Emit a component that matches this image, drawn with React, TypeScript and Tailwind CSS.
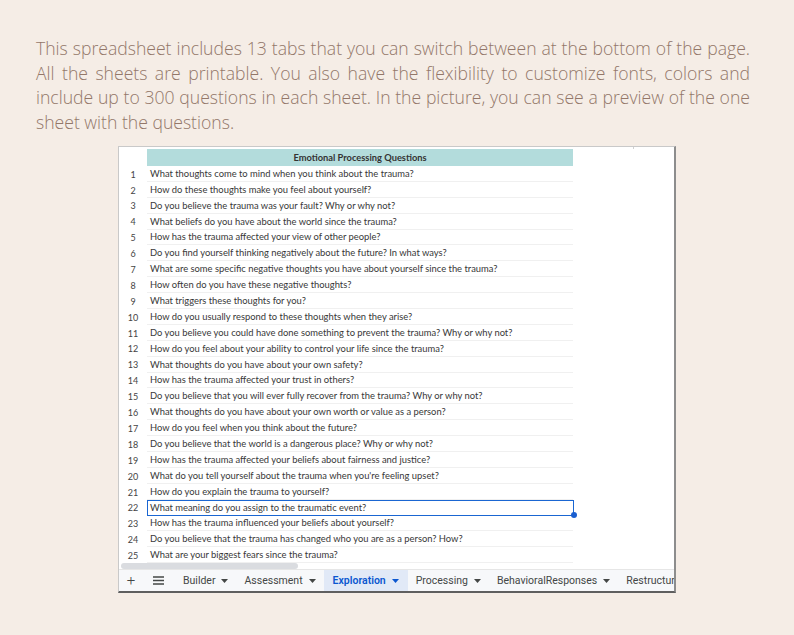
const questions = [
  "What thoughts come to mind when you think about the trauma?",
  "How do these thoughts make you feel about yourself?",
  "Do you believe the trauma was your fault? Why or why not?",
  "What beliefs do you have about the world since the trauma?",
  "How has the trauma affected your view of other people?",
  "Do you find yourself thinking negatively about the future? In what ways?",
  "What are some specific negative thoughts you have about yourself since the trauma?",
  "How often do you have these negative thoughts?",
  "What triggers these thoughts for you?",
  "How do you usually respond to these thoughts when they arise?",
  "Do you believe you could have done something to prevent the trauma? Why or why not?",
  "How do you feel about your ability to control your life since the trauma?",
  "What thoughts do you have about your own safety?",
  "How has the trauma affected your trust in others?",
  "Do you believe that you will ever fully recover from the trauma? Why or why not?",
  "What thoughts do you have about your own worth or value as a person?",
  "How do you feel when you think about the future?",
  "Do you believe that the world is a dangerous place? Why or why not?",
  "How has the trauma affected your beliefs about fairness and justice?",
  "What do you tell yourself about the trauma when you're feeling upset?",
  "How do you explain the trauma to yourself?",
  "What meaning do you assign to the traumatic event?",
  "How has the trauma influenced your beliefs about yourself?",
  "Do you believe that the trauma has changed who you are as a person? How?",
  "What are your biggest fears since the trauma?",
]

const tabs = ["Builder", "Assessment", "Exploration", "Processing", "BehavioralResponses", "Restructuring"]

// intro copy, split the way it wraps on the product page
const intro = [
  "This spreadsheet includes 13 tabs that you can switch between at the bottom of the page.",
  "All the sheets are printable. You also have the flexibility to customize fonts, colors and",
  "include up to 300 questions in each sheet. In the picture, you can see a preview of the one",
  "sheet with the questions.",
]

function SheetTab({ label, active }: { label: string; active?: boolean }) {
  return (
    <div
      className={
        active
          ? "flex h-full shrink-0 items-center gap-[6px] bg-[#e1e9f7] px-[9px] font-semibold text-[#0b57d0]"
          : "flex h-full shrink-0 items-center gap-[6px] px-[8px] text-[#444746]"
      }
    >
      <span>{label}</span>
      <svg width="7" height="4" viewBox="0 0 7 4" fill="currentColor">
        <path d="M0 0h7L3.5 4z" />
      </svg>
    </div>
  )
}

export default function App() {
  return (
    <div className="h-[635px] w-[794px] overflow-hidden bg-[#f5ede6]">
      <div
        className="ml-[36px] mt-[36px] w-[714px] text-[17.6px] font-light leading-[24.5px] text-[#937769]"
        style={{ fontFamily: "'Open Sans', Lato, sans-serif" }}
      >
        {intro.map((line, i) => (
          <div
            key={i}
            className={i < 3 ? "whitespace-nowrap text-justify [text-align-last:justify]" : "whitespace-nowrap"}
          >
            {line}
          </div>
        ))}
      </div>

      <div className="ml-[118px] mt-[12px] flex h-[447px] w-[558px] flex-col overflow-hidden border-t border-l border-[#c9c9c9] border-r-2 border-b-2 border-r-[#8d8d8d] border-b-[#5f5f5f] bg-white">
        {/* frozen column header strip */}
        <div className="flex h-[2px] shrink-0">
          <div className="w-[515px] border-r border-[#d0d0d0]" />
        </div>

        <div className="flex h-[17px] shrink-0" style={{ fontFamily: "Lato, 'Open Sans', sans-serif" }}>
          <div className="w-[28px] shrink-0" />
          <div className="flex w-[426px] items-center justify-center bg-[#b3dcdc] text-[9.3px] font-bold text-[#333]">
            Emotional Processing Questions
          </div>
        </div>

        <div className="flex flex-col" style={{ fontFamily: "Lato, 'Open Sans', sans-serif" }}>
          {questions.map((q, i) => (
            <div key={i} className="flex h-[15.9px] shrink-0">
              <div className="flex w-[28px] shrink-0 items-center justify-center pt-[1px] text-[9px] text-[#444]">{i + 1}</div>
              <div
                className={
                  i === 21
                    ? "relative flex w-[427px] items-center whitespace-nowrap border border-[#1a66d2] pl-[2px] text-[9.4px] text-[#383838]"
                    : "flex w-[426px] items-center whitespace-nowrap border-b border-[#f0f0f0] pl-[3px] pt-[1px] text-[9.4px] text-[#383838]"
                }
              >
                {q}
                {i === 21 && (
                  <span className="absolute -bottom-[3.5px] -right-[3.5px] h-[6px] w-[6px] rounded-full bg-[#1a5fd0]" />
                )}
              </div>
            </div>
          ))}
        </div>

        {/* horizontal scrollbar */}
        <div className="flex h-[7px] shrink-0 items-center border-b border-[#e6e6e6] pl-[2px]">
          <div className="h-[6px] w-[177px] rounded-full bg-[#dadce0]" />
        </div>

        <div
          className="flex flex-1 items-center overflow-hidden bg-[#f7f8fa] text-[10.5px]"
          style={{ fontFamily: "Roboto, 'Open Sans', sans-serif" }}
        >
          <div className="flex w-[24px] shrink-0 justify-center text-[15px] font-light text-[#444746]">+</div>
          <div className="flex w-[30px] shrink-0 justify-center">
            <svg width="11" height="9" viewBox="0 0 11 9" stroke="#444746" strokeWidth="1.3">
              <path d="M0 1h11M0 4.5h11M0 8h11" />
            </svg>
          </div>
          <div className="w-[2px] shrink-0" />
          {tabs.map((t) => (
            <SheetTab key={t} label={t} active={t === "Exploration"} />
          ))}
        </div>
      </div>
    </div>
  )
}
